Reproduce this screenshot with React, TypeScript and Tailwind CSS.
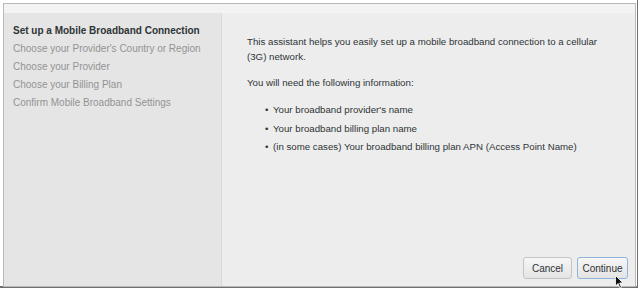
import React from 'react';

const steps = [
  "Choose your Provider's Country or Region",
  'Choose your Provider',
  'Choose your Billing Plan',
  'Confirm Mobile Broadband Settings',
];

const needs = [
  "Your broadband provider's name",
  'Your broadband billing plan name',
  '(in some cases) Your broadband billing plan APN (Access Point Name)',
];

export default function App() {
  return (
    <div
      className="relative w-[640px] h-[290px] overflow-hidden bg-white"
      style={{ fontFamily: '"Liberation Sans", Arial, sans-serif' }}
    >
      {/* window behind */}
      <div className="absolute left-0 top-0 w-[638px] h-[288px] border-r border-b-2 border-[#6f6f6f]" />

      {/* dialog */}
      <div className="relative ml-[3px] mt-[3px] w-[633px] h-[284px] flex flex-col border border-[#b9b9b9] bg-[#ededed]">
        <div className="h-[9px] bg-[#f3f3f3]" />
        <div className="flex flex-1">
          {/* sidebar */}
          <div className="w-[218px] bg-[#e5e5e5] border-r border-[#dadada] pl-[9px] pt-[9px] text-[10px] leading-[18px]">
            <div className="font-bold text-[#2e3436]">Set up a Mobile Broadband Connection</div>
            {steps.map((s) => (
              <div key={s} className="text-[#939393]">
                {s}
              </div>
            ))}
          </div>

          {/* content */}
          <div className="flex-1 flex flex-col pl-[25px] pr-[7px] pt-[21px] pb-[7px] text-[9.7px] text-[#2e3436]">
            <p className="leading-[15px] w-[370px]">
              This assistant helps you easily set up a mobile broadband connection to a cellular (3G) network.
            </p>
            <p className="mt-[11px] leading-[15px]">You will need the following information:</p>
            <ul className="mt-[11px] pl-[18px] leading-[18.5px]">
              {needs.map((n) => (
                <li key={n} className="flex">
                  <span className="w-[8px]">•</span>
                  <span>{n}</span>
                </li>
              ))}
            </ul>
            <div className="mt-auto flex justify-end gap-[5px]">
              <button className="w-[49px] h-[22px] rounded-[3px] border border-[#c4c4c4] bg-gradient-to-b from-[#f6f6f6] to-[#e4e4e4] text-[10px] text-[#2e3436]">
                Cancel
              </button>
              <button className="w-[51px] h-[22px] rounded-[3px] border border-[#8fb3d9] bg-gradient-to-b from-[#f6f6f6] to-[#e4e4e4] text-[10px] text-[#2e3436]">
                Continue
              </button>
            </div>
          </div>
        </div>
      </div>

      {/* mouse pointer */}
      <svg className="absolute left-[615px] top-[275px]" width="9" height="14" viewBox="0 0 9 14">
        <path d="M0.5 0.5 L0.5 11 L3 8.5 L5 13 L6.5 12.3 L4.6 8 L8 8 Z" fill="#111" stroke="#fff" strokeWidth="0.8" />
      </svg>
    </div>
  );
}
